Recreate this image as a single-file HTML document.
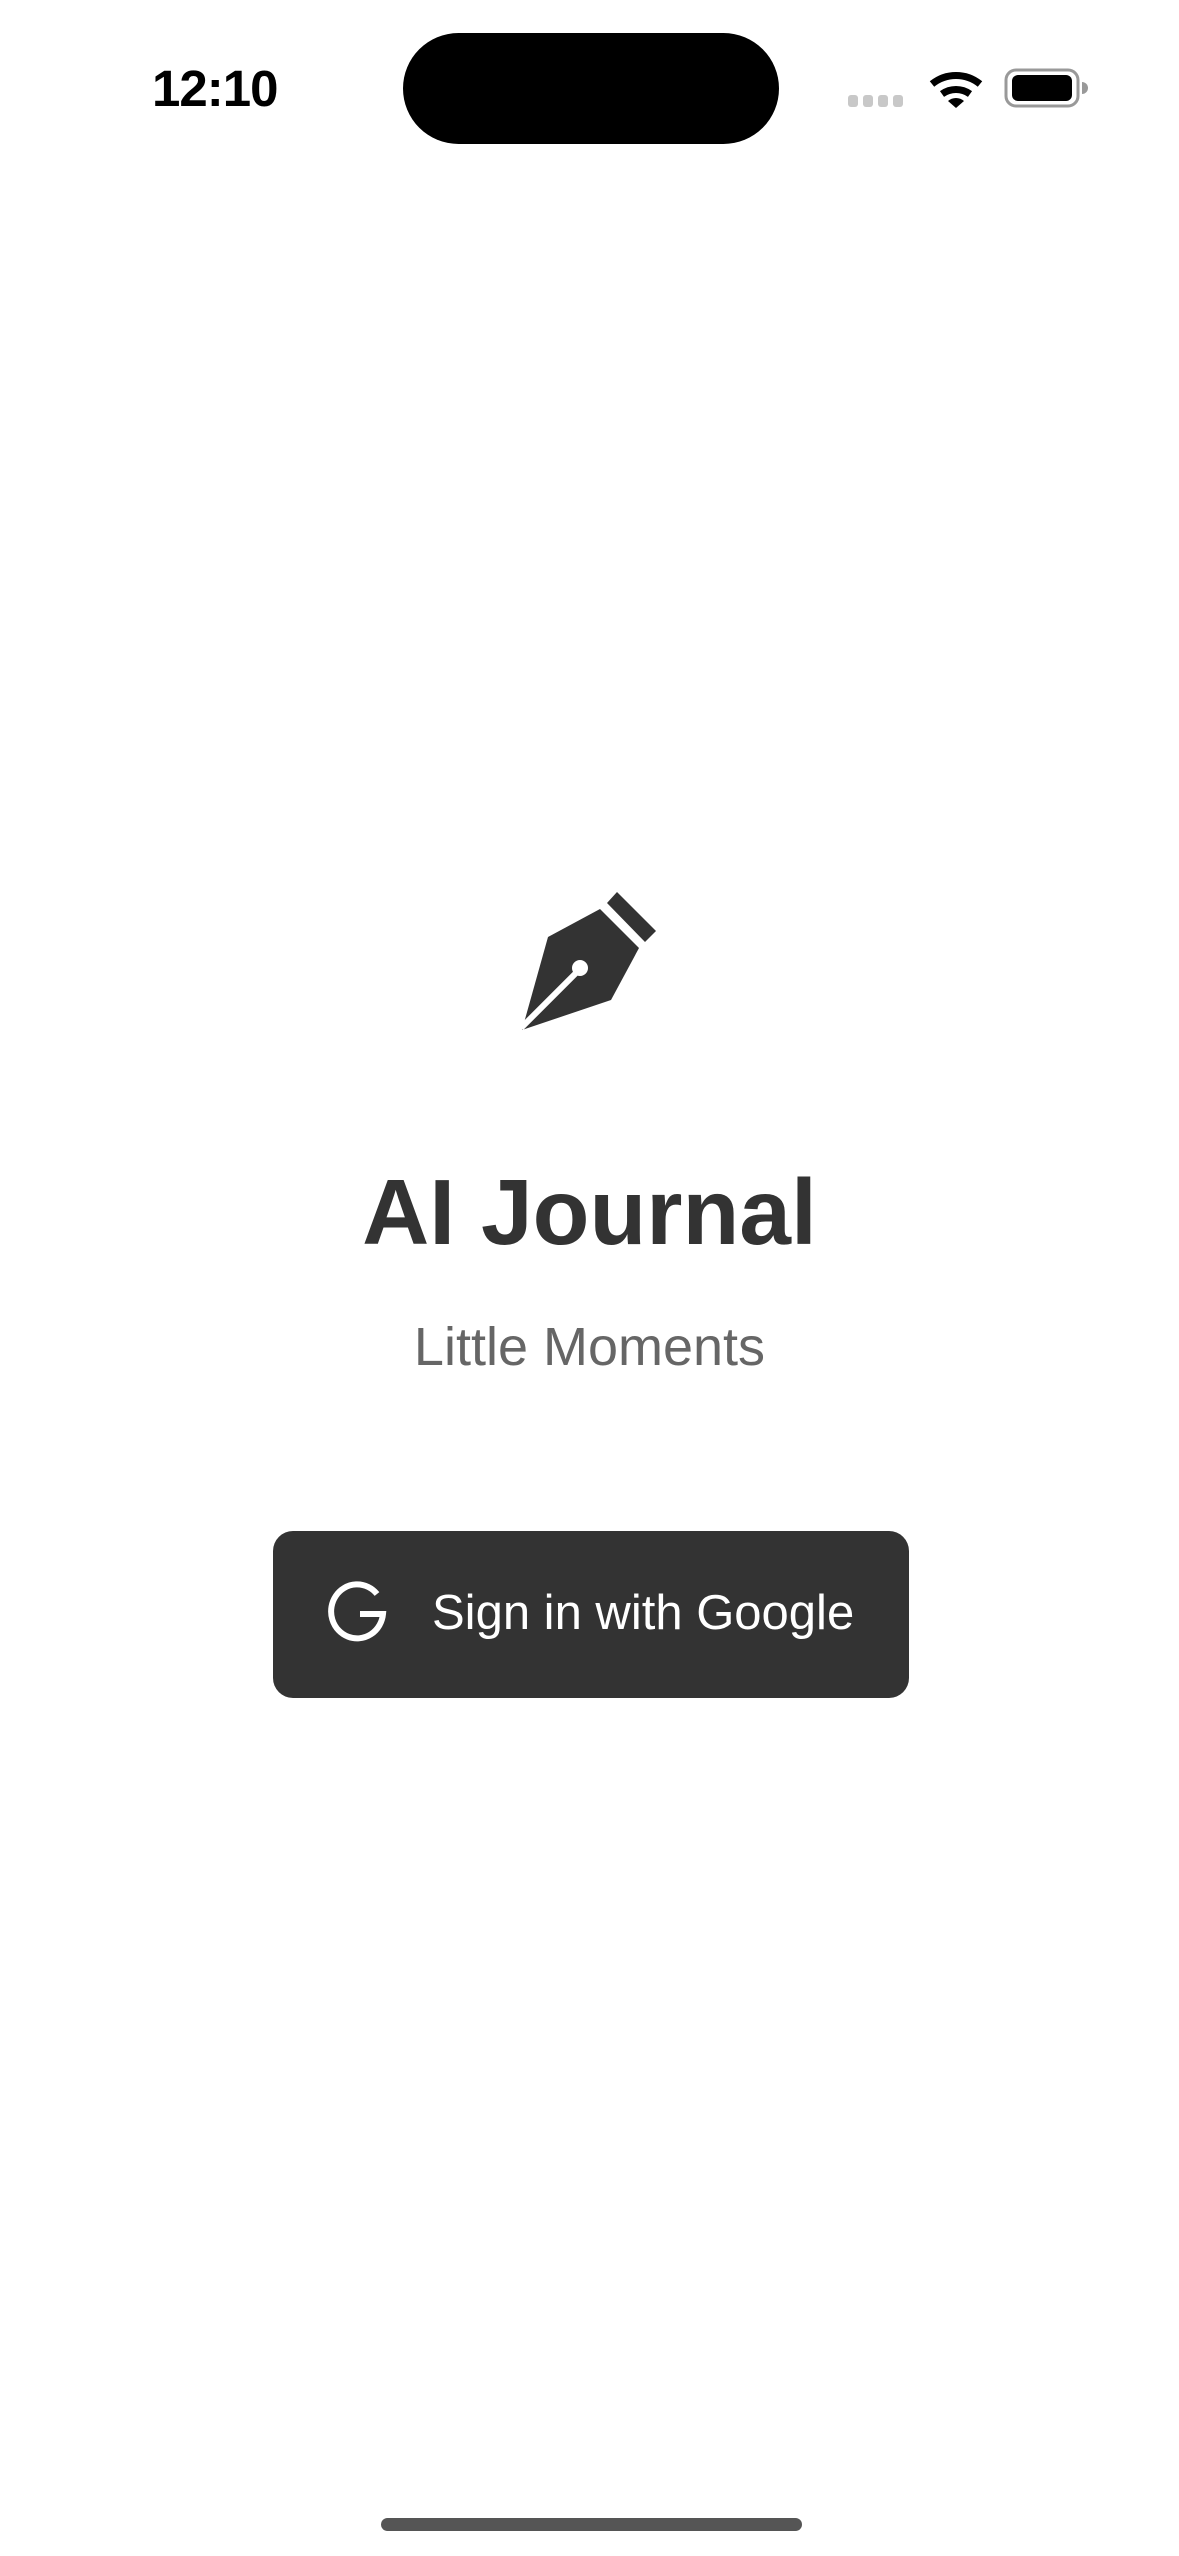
<!DOCTYPE html>
<html><head><meta charset="utf-8"><style>
html,body{margin:0;padding:0;background:#fff;}
body{width:1179px;height:2556px;position:relative;overflow:hidden;font-family:"Liberation Sans",sans-serif;}
.a{position:absolute;white-space:nowrap;line-height:1;}
</style></head><body>
<div class="a" style="left:152px;top:63px;font-size:51px;font-weight:bold;color:#000;letter-spacing:-1px;">12:10</div>
<div class="a" style="left:403px;top:33px;width:376px;height:111px;background:#000;border-radius:56px;"></div>
<svg class="a" style="left:840px;top:60px" width="250" height="60" viewBox="840 60 250 60">
<g fill="#c8c8c8"><rect x="848" y="95" width="10" height="12" rx="3"/><rect x="863" y="95" width="10" height="12" rx="3"/><rect x="878" y="95" width="10" height="12" rx="3"/><rect x="893" y="95" width="10" height="12" rx="3"/></g>
<g fill="none" stroke="#000" stroke-width="7"><path d="M932 84 A38 38 0 0 1 980 84"/><path d="M942 94 A24 24 0 0 1 970 94"/></g>
<path d="M948 101 L956 108 L964 101 A12 12 0 0 0 948 101Z" fill="#000"/>
<rect x="1006" y="70" width="72" height="36" rx="10" fill="none" stroke="#999" stroke-width="3"/>
<rect x="1012" y="75" width="60" height="26" rx="6" fill="#000"/>
<path d="M1082 82 a6 6 0 0 1 0 12z" fill="#999"/>
</svg>
<svg class="a" style="left:500px;top:880px" width="180" height="160" viewBox="500 880 180 160">
<path d="M548 937 L600 909 L639 948 L611 1000 L522 1030 Z" fill="#333"/>
<path d="M607 903 L617 892 L656 931 L645 942 Z" fill="#333"/>
<line x1="521" y1="1028" x2="580" y2="969" stroke="#fff" stroke-width="6"/>
<circle cx="580" cy="968" r="8" fill="#fff"/>
</svg>
<div class="a" style="left:0;width:1179px;text-align:center;top:1166px;font-size:93px;font-weight:bold;color:#333;">AI Journal</div>
<div class="a" style="left:0;width:1179px;text-align:center;top:1320px;font-size:54px;color:#666;">Little Moments</div>
<div class="a" style="left:273px;top:1531px;width:636px;height:167px;background:#333;border-radius:20px;"></div>
<svg class="a" style="left:322px;top:1580px" width="70" height="66" viewBox="0 0 70 66">
<path d="M55 14 A26 27 0 1 0 61 34 L38 34" fill="none" stroke="#fff" stroke-width="6"/>
</svg>
<div class="a" style="left:432px;top:1589px;font-size:49px;color:#fff;">Sign in with Google</div>
<div class="a" style="left:381px;top:2518px;width:421px;height:13px;border-radius:7px;background:#555;"></div>
</body></html>
